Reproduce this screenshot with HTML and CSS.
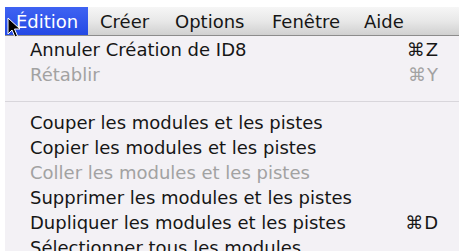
FILE: index.html
```html
<!DOCTYPE html>
<html lang="fr">
<head>
<meta charset="utf-8">
<link rel="stylesheet" href="styles.css">
</head>
<body>
<div class="screen">
  <div class="menubar">
    <span class="mb-item active">Édition</span>
    <span class="mb-item w-creer">Créer</span>
    <span class="mb-item w-options">Options</span>
    <span class="mb-item w-fenetre">Fenêtre</span>
    <span class="mb-item">Aide</span>
  </div>
  <div class="menu">
    <div class="row"><span>Annuler Création de ID8</span><span class="key">⌘Z</span></div>
    <div class="row disabled"><span>Rétablir</span><span class="key">⌘Y</span></div>
    <div class="sep"></div>
    <div class="row"><span>Couper les modules et les pistes</span></div>
    <div class="row"><span>Copier les modules et les pistes</span></div>
    <div class="row disabled"><span>Coller les modules et les pistes</span></div>
    <div class="row"><span>Supprimer les modules et les pistes</span></div>
    <div class="row"><span>Dupliquer les modules et les pistes</span><span class="key">⌘D</span></div>
    <div class="row"><span>Sélectionner tous les modules</span></div>
  </div>
  <svg class="cursor" width="14" height="22" viewBox="0 0 14 22">
    <path d="M1 1 L1 17 L5 13 L8 20 L10.5 19 L7.5 12 L13 12 Z" fill="#000" stroke="#fff" stroke-width="1"/>
  </svg>
</div>
</body>
</html>
```
FILE: styles.css
```css
html, body {
  margin: 0;
  padding: 0;
  background: #fff;
}
body {
  width: 459px;
  height: 251px;
  overflow: hidden;
  font-family: "DejaVu Sans", "Open Sans", sans-serif;
  font-size: 18px;
  color: #161616;
}
.screen {
  position: relative;
  padding: 7px 0 0 5px;
}
.menubar {
  display: flex;
  height: 28px;
  align-items: stretch;
  background: linear-gradient(#f6f6f6, #e8e8e8 50%, #d0d0d0);
  border-bottom: 1px solid #8c8c8c;
}
.mb-item {
  display: flex;
  align-items: center;
  padding: 0 0 0 12px;
  flex: none;
}
.mb-item.active {
  background: linear-gradient(#3f63f2, #2449e4);
  color: #fff;
  width: 72px;
  padding-left: 11px;
}
.w-creer { width: 63px; }
.w-options { width: 85px; }
.w-fenetre { width: 80px; }
.menu {
  background: #f3f1f5;
  padding-top: 1px;
  height: 230px;
}
.row {
  display: flex;
  justify-content: space-between;
  height: 25px;
  line-height: 25px;
  padding: 0 20px 0 25px;
  white-space: nowrap;
}
.row.disabled { color: #a2a2a2; }
.key {
  letter-spacing: 1px;
}
.sep {
  height: 1px;
  background: #d8d6db;
  margin: 14px 0 8px;
}
.cursor {
  position: absolute;
  left: 7px;
  top: 17px;
}
```
